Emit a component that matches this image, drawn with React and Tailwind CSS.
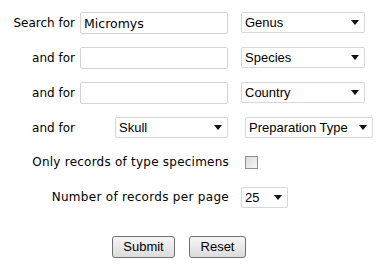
import { useState } from "react";

const label = "font-['DejaVu_Sans',sans-serif] text-[12px] text-black";

function Arrow() {
  return (
    <svg width="8" height="5" viewBox="0 0 8 5" className="shrink-0">
      <path d="M0 0h8L4 5z" fill="#111" />
    </svg>
  );
}

function Select({ value, className }) {
  return (
    <div
      className={`flex items-center justify-between h-[21px] pl-[3px] pr-[5px] bg-white border border-[#d6d6dc] rounded-[2px] font-['Liberation_Sans',Arial,sans-serif] text-[13px] text-black ${className}`}
    >
      <span className="leading-none">{value}</span>
      <Arrow />
    </div>
  );
}

function TextInput({ value }) {
  const [v, setV] = useState(value);
  return (
    <input
      value={v}
      onChange={(e) => setV(e.target.value)}
      className="w-[148px] h-[22px] px-[3px] bg-white border border-[#d3d3d3] rounded-[2px] outline-none font-['DejaVu_Sans',sans-serif] text-[12.5px] text-black"
    />
  );
}

function Button({ children, className }) {
  return (
    <button className={`h-[22px] border border-[#707070] rounded-[3px] bg-gradient-to-b from-[#f6f6f6] to-[#dcdcdc] font-['Liberation_Sans',Arial,sans-serif] text-[13px] text-black ${className}`}>
      {children}
    </button>
  );
}

export default function App() {
  const rows = [
    { label: "Search for", value: "Micromys", select: "Genus" },
    { label: "and for", value: "", select: "Species" },
    { label: "and for", value: "", select: "Country" },
  ];

  return (
    <div className="w-[382px] h-[268px] bg-white pt-[11px] flex flex-col">
      {rows.map((r, i) => (
        <div key={i} className="flex items-center h-[22px] mb-[13px]">
          <div className={`${label} w-[75px] text-right pt-[1px]`}>{r.label}</div>
          <div className="ml-[5px]">
            <TextInput value={r.value} />
          </div>
          <Select value={r.select} className="ml-[13px] w-[124px]" />
        </div>
      ))}

      <div className="flex items-center h-[22px] mb-[13px]">
        <div className={`${label} w-[75px] text-right pt-[1px]`}>and for</div>
        <Select value="Skull" className="ml-[40px] w-[113px]" />
        <Select value="Preparation Type" className="ml-[17px] w-[128px]" />
      </div>

      <div className="flex items-center h-[22px] mb-[13px]">
        <div className={`${label} w-[229px] text-right tracking-[0.23px]`}>Only records of type specimens</div>
        <div className="ml-[16px] w-[13px] h-[13px] border border-[#8f8f8f] bg-gradient-to-br from-[#dcdcdc] to-[#f7f7f7]" />
      </div>

      <div className="flex items-center h-[22px]">
        <div className={`${label} w-[229px] text-right tracking-[0.3px]`}>Number of records per page</div>
        <Select value="25" className="ml-[12px] w-[47px]" />
      </div>

      <div className="flex mt-[28px] pl-[112px] gap-[14px]">
        <Button className="w-[63px]">Submit</Button>
        <Button className="w-[57px]">Reset</Button>
      </div>
    </div>
  );
}
